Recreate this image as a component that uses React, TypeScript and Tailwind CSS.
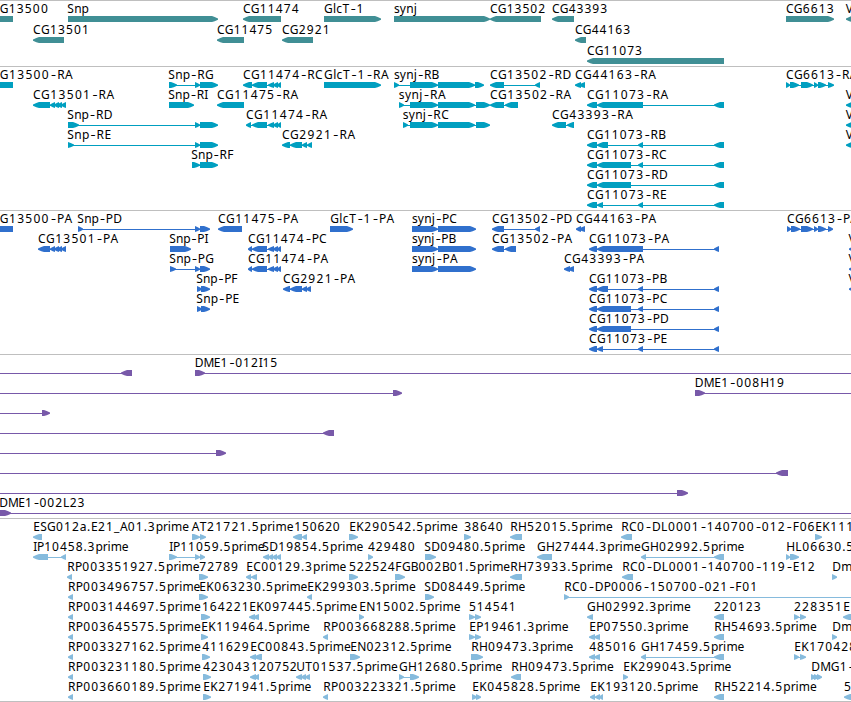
type Exon = [number, number];
type Feature = {
  label: string;
  from: number;
  to: number;
  strand: '+' | '-';
  exons: Exon[];
};
type TrackData = { name: string; color: string; height: string; pitch: number; rows: Feature[][] };

const f = (label: string, from: number, to: number, strand: '+' | '-', ...exons: Exon[]): Feature => ({
  label, from, to, strand, exons,
});

// Horizontal advance of each glyph in the label face, in pixels.
const ADVANCE: Record<string, number> = {
  '-': 7, '.': 4, _: 6, A: 8, B: 7.8, C: 8, D: 9, E: 7, F: 7, G: 9, H: 9, I: 3.8, K: 8, L: 7, M: 10.5,
  N: 9.3, P: 7.4, R: 7.8, S: 7, T: 7.2, U: 9, V: 8, a: 7.3, c: 6.3, e: 7, j: 3.4, i: 3.3, l: 3.3,
  m: 11.2, n: 7.5, p: 7.4, r: 4.8, s: 6, y: 6.5,
};

function glyphPositions(text: string, from: number, to: number) {
  const widths = [...text].map((c) => ADVANCE[c] ?? 8);
  const total = widths.reduce((a, b) => a + b, 0);
  const scale = to > 0 ? (to - from + 1.4) / total : 1;
  let x = from - 0.8;
  return widths.map((w, i) => {
    const at = x + (text[i] === '-' ? 0.9 : 0);
    x += w * scale;
    return at.toFixed(2);
  });
}

function Label({ text, from, to, y }: { text: string; from: number; to: number; y: number }) {
  const xs = glyphPositions(text, from, to);
  const runs = text.match(/-|[^-]+/g) ?? [];
  let offset = 0;
  return (
    <text y={y} className="fill-black font-['Noto_Sans','Open_Sans',sans-serif] text-[12px]">
      {runs.map((run, i) => {
        const x = xs.slice(offset, offset + run.length).join(' ');
        offset += run.length;
        return (
          <tspan key={i} x={x} className={run === '-' ? "font-['Inter','Noto_Sans',sans-serif]" : undefined}>
            {run}
          </tspan>
        );
      })}
    </text>
  );
}

// Box with a rounded-off arrow tip on the side the strand points to.
function exonPoints([a, b]: Exon, strand: '+' | '-', y: number) {
  const head = Math.min(6, b - a);
  const tip = strand === '+' ? b : a;
  const back = strand === '+' ? a : b;
  const dir = strand === '+' ? -1 : 1;
  return [
    [back, y],
    [tip + dir * head, y],
    [tip + dir * head * 0.55, y + 0.9],
    [tip, y + 2.4],
    [tip, y + 3.8],
    [tip + dir * head * 0.55, y + 5.2],
    [tip + dir * head, y + 6],
    [back, y + 6],
  ].map((p) => p.join(',')).join(' ');
}

const EDGE = 870;
const genes: TrackData = {
  name: 'Genes', color: '#408f95', height: 'h-[66px]', pitch: 21,
  rows: [
    [
      f('G13500', 0.6, 48.3, '-', [-20, 13]), f('Snp', 68, 88.3, '+', [68, 218]),
      f('CG11474', 243.7, 299, '-', [243, 281]), f('GlcT-1', 324.7, 364, '+', [324, 381]),
      f('synj', 394.7, 416.5, '+', [394, 490]), f('CG13502', 490.7, 545.5, '-', [490, 541]),
      f('CG43393', 552.7, 607.5, '-', [552, 574]), f('CG6613', 786.7, 834, '+', [786, 834]),
      f('V', 846.5, 0, '-', [846, EDGE]),
    ],
    [
      f('CG13501', 33.7, 89.3, '-', [33, 64]), f('CG11475', 217.7, 272.5, '-', [217, 244]),
      f('CG2921', 282.7, 330, '-', [282, 313]), f('CG44163', 575.7, 630.5, '-', [575, 586]),
    ],
    [f('CG11073', 587.7, 642.3, '-', [587, 724])],
  ],
};

const transcripts: TrackData = {
  name: 'Transcripts', color: '#009fc0', height: 'h-[144px]', pitch: 20,
  rows: [
    [
      f('G13500-RA', 0.6, 72.7, '-', [-20, 13]),
      f('Snp-RG', 169, 213.5, '+', [169, 177], [195, 200], [200, 218]),
      f('CG11474-RC', 243.7, 322.5, '-', [243, 252], [252, 267], [268, 274], [273, 278], [277, 281]),
      f('GlcT-1-RA', 324.7, 388.5, '+', [324, 381]),
      f('synj-RB', 394.7, 438.7, '+', [394, 399], [410, 438], [438, 475], [475, 484]),
      f('CG13502-RD', 490.7, 571, '-', [490, 504], [535, 540]),
      f('CG44163-RA', 575.7, 655.7, '-', [575, 581], [579, 585]),
      f('CG6613-RA', 786.7, 0, '+', [786, 790], [790, 799], [801, 813], [814, 818], [818, 826], [828, 834]),
    ],
    [
      f('CG13501-RA', 33.7, 114, '-', [33, 50], [50, 55], [54, 59], [57, 62], [61, 66]),
      f('Snp-RI', 169, 207.5, '+', [169, 194]),
      f('CG11475-RA', 217.7, 298, '-', [217, 244]),
      f('synj-RA', 399.5, 445.7, '+', [399, 404], [410, 438], [438, 475], [476, 490]),
      f('CG13502-RA', 490.7, 571, '-', [490, 504], [505, 518]),
      f('CG11073-RA', 587.7, 668, '-', [587, 597], [597, 643], [714, 724]),
      f('V', 846.5, 0, '-', [846, EDGE]),
    ],
    [
      f('Snp-RD', 68, 112, '+', [68, 79], [195, 200], [200, 218]),
      f('CG11474-RA', 246.7, 327, '-', [246, 251], [252, 267], [268, 274], [273, 278], [277, 281]),
      f('synj-RC', 403.5, 448.7, '+', [403, 408], [410, 438], [438, 475], [476, 490]),
      f('CG43393-RA', 552.7, 632.7, '-', [552, 566], [567, 574]),
      f('V', 846.5, 0, '-', [846, EDGE]),
    ],
    [
      f('Snp-RE', 68, 111, '+', [68, 74], [195, 200], [200, 218]),
      f('CG2921-RA', 282.7, 355, '-', [282, 290], [290, 302], [302, 307], [307, 312]),
      f('CG11073-RB', 587.7, 665.5, '-', [587, 597], [597, 608], [638, 643], [714, 724]),
      f('V', 846.5, 0, '-', [846, EDGE]),
    ],
    [
      f('Snp-RF', 192, 233.5, '+', [192, 200], [200, 218]),
      f('CG11073-RC', 587.7, 666.5, '-', [587, 597], [597, 631], [638, 643], [714, 724]),
    ],
    [f('CG11073-RD', 587.7, 667.5, '-', [587, 597], [597, 631], [714, 724])],
    [f('CG11073-RE', 587.7, 666.5, '-', [587, 597], [597, 603], [638, 643], [714, 724])],
  ],
};

const cds: TrackData = {
  name: 'CDS', color: '#3070cd', height: 'h-[144px]', pitch: 20,
  rows: [
    [
      f('G13500-PA', 0.6, 72, '-', [-20, 13]),
      f('Snp-PD', 78, 121.5, '+', [78, 83], [195, 200], [200, 210]),
      f('CG11475-PA', 218.7, 298, '-', [218, 242]),
      f('GlcT-1-PA', 331, 394, '+', [330, 353]),
      f('synj-PC', 412.7, 456.5, '+', [412, 438], [438, 476]),
      f('CG13502-PD', 492.7, 572, '-', [492, 504], [535, 540]),
      f('CG44163-PA', 576.7, 656, '-', [576, 581], [579, 585]),
      f('CG6613-PA', 787.7, 0, '+', [787, 791], [791, 800], [801, 813], [814, 818], [818, 826], [828, 833]),
    ],
    [
      f('CG13501-PA', 38.7, 118, '-', [38, 50], [50, 55], [54, 59], [57, 62], [61, 66]),
      f('Snp-PI', 170, 207.5, '+', [170, 191]),
      f('CG11474-PC', 248.7, 326.5, '-', [248, 252], [252, 267], [268, 274], [273, 278], [277, 281]),
      f('synj-PB', 412.7, 455.5, '+', [412, 438], [438, 476]),
      f('CG13502-PA', 492.7, 572, '-', [492, 504], [505, 516]),
      f('CG11073-PA', 589.7, 669, '-', [589, 597], [597, 643], [714, 719]),
      f('V', 849.3, 0, '-', [849, EDGE]),
    ],
    [
      f('Snp-PG', 170, 213.5, '+', [170, 176], [195, 200], [200, 210]),
      f('CG11474-PA', 248.7, 328, '-', [248, 252], [252, 267], [268, 274], [273, 278], [277, 281]),
      f('synj-PA', 412.7, 457.5, '+', [412, 438], [438, 476]),
      f('CG43393-PA', 564.7, 644, '-', [564, 570], [568, 574]),
      f('V', 849.3, 0, '-', [849, EDGE]),
    ],
    [
      f('Snp-PF', 197, 237.5, '+', [197, 202], [201, 210]),
      f('CG2921-PA', 283.7, 355, '-', [283, 290], [290, 302], [302, 307], [306, 311]),
      f('CG11073-PB', 589.7, 666.5, '-', [589, 597], [597, 608], [638, 643], [714, 719]),
      f('V', 849.3, 0, '-', [849, EDGE]),
    ],
    [
      f('Snp-PE', 197, 239, '+', [197, 202], [201, 210]),
      f('CG11073-PC', 589.7, 667, '-', [589, 597], [597, 631], [638, 643], [714, 719]),
    ],
    [f('CG11073-PD', 589.7, 668.5, '-', [589, 597], [597, 631], [714, 719])],
    [f('CG11073-PE', 589.7, 667, '-', [589, 597], [597, 603], [638, 643], [714, 719])],
  ],
};

const bacs: TrackData = {
  name: 'BACs', color: '#7859a9', height: 'h-[164px]', pitch: 20,
  rows: [
    [f('', 0, 0, '-', [-20, -10], [121, 132]), f('DME1-012I15', 195.5, 277.5, '+', [195, 205], [860, EDGE])],
    [f('', 0, 0, '+', [-20, -10], [393, 402]), f('DME1-008H19', 695.5, 784.5, '+', [695, 705], [860, EDGE])],
    [f('', 0, 0, '+', [-20, -10], [42, 50])],
    [f('', 0, 0, '-', [-20, -10], [323, 334])],
    [f('', 0, 0, '+', [-20, -10], [216, 226])],
    [f('', 0, 0, '-', [-20, -10], [776, 788])],
    [f('', 0, 0, '+', [-20, -10], [677, 688])],
    [f('DME1-002L23', 0, 84.7, '+', [-1, 11], [860, EDGE])],
  ],
};

const ests: TrackData = {
  name: 'ESTs', color: '#86bbdd', height: 'h-[183px]', pitch: 20,
  rows: [
    [
      f('ESG012a.E21_A01.3prime', 34, 188.5, '-', [33, 42]),
      f('AT21721.5prime', 192.5, 293.3, '+', [192, 200], [200, 206]),
      f('150620', 295, 340, '-', [293, 302], [302, 307]),
      f('EK290542.5prime', 350, 457.5, '+', [349, 358]),
      f('38640', 465, 503, '+', [464, 471]),
      f('RH52015.5prime', 511, 612.5, '-', [510, 522]),
      f('RC0-DL0001-140700-012-F06', 622, 815, '-', [621, 632]),
      f('EK111', 816, 0, '+', [815, 822]),
    ],
    [
      f('IP10458.3prime', 34, 128, '-', [33, 48], [61, 66]),
      f('IP11059.5prime', 170, 264, '+', [169, 177], [195, 200], [200, 205]),
      f('SD19854.5prime', 263, 363, '-', [263, 269], [268, 273], [272, 277], [276, 281]),
      f('429480', 368.7, 415, '+', [368, 373]),
      f('SD09480.5prime', 425, 525, '+', [425, 436]),
      f('GH27444.3prime', 537.7, 640.5, '-', [537, 552]),
      f('GH02992.5prime', 641.7, 744, '-', [641, 646], [714, 724]),
      f('HL06630.5prime', 787, 0, '+', [786, 790], [790, 799]),
    ],
    [
      f('RP003351927.5prime', 68, 199, '-', [67, 72]),
      f('72789', 200, 238.5, '+', [199, 208]),
      f('EC00129.3prime', 247, 346, '-', [246, 251], [251, 257]),
      f('522524', 349.7, 395, '+', [349, 358]),
      f('FGB002B01.5prime', 396, 509.5, '+', [395, 405]),
      f('RH73933.5prime', 511, 612.5, '-', [510, 522]),
      f('RC0-DL0001-140700-119-E12', 623, 815, '-', [622, 633]),
      f('Dm', 833, 0, '+', [832, 837]),
    ],
    [
      f('RP003496757.5prime', 68.7, 200, '-', [68, 73]),
      f('EK063230.5prime', 200, 307, '+', [199, 208]),
      f('EK299303.5prime', 308, 415.5, '-', [307, 312]),
      f('SD08449.5prime', 425, 525, '+', [425, 434]),
      f('RC0-DP0006-150700-021-F01', 565, 757.5, '+', [564, 569], [860, EDGE]),
    ],
    [
      f('RP003144697.5prime', 68.7, 200.5, '-', [68, 73]),
      f('164221', 202.7, 249, '+', [201, 210]),
      f('EK097445.5prime', 250, 357, '-', [249, 255], [253, 259]),
      f('EN15002.5prime', 360, 460, '+', [359, 364]),
      f('514541', 469.7, 516, '+', [469, 475], [475, 481]),
      f('GH02992.3prime', 587.7, 690.5, '-', [587, 593]),
      f('220123', 714.7, 761, '-', [714, 724]),
      f('228351', 794.7, 842.5, '+', [794, 799], [800, 806]),
      f('E', 844, 0, '-', [843, EDGE]),
    ],
    [
      f('RP003645575.5prime', 68.7, 200.5, '-', [68, 73]),
      f('EK119464.5prime', 202, 309.5, '+', [201, 208]),
      f('RP003668288.5prime', 324, 455.5, '-', [323, 328]),
      f('EP19461.3prime', 470, 568, '+', [469, 475], [475, 481]),
      f('EP07550.3prime', 590, 688, '-', [589, 595], [594, 600]),
      f('RH54693.5prime', 715, 816.5, '-', [714, 724]),
      f('Dm', 833, 0, '+', [832, 837]),
    ],
    [
      f('RP003327162.5prime', 68.7, 200.5, '-', [68, 73]),
      f('411629', 203, 249, '+', [202, 210]),
      f('EC00843.5prime', 251, 350.5, '-', [250, 256], [254, 262]),
      f('EN02312.5prime', 351, 451, '+', [350, 360]),
      f('RH09473.3prime', 472, 573, '+', [471, 483]),
      f('485016', 590, 636, '-', [589, 595], [594, 600]),
      f('GH17459.5prime', 641.7, 744, '-', [641, 646], [714, 724]),
      f('EK170428', 795, 0, '+', [794, 799], [800, 806]),
    ],
    [
      f('RP003231180.5prime', 68.7, 200.5, '-', [68, 73]),
      f('423043', 203.7, 250, '+', [203, 211]),
      f('120752', 252, 297, '-', [250, 256], [254, 259]),
      f('UT01537.5prime', 297, 397.5, '-', [296, 302], [301, 306], [305, 310]),
      f('GH12680.5prime', 399.7, 502, '+', [399, 404], [410, 419]),
      f('RH09473.5prime', 512, 613.5, '-', [511, 521]),
      f('EK299043.5prime', 624, 731, '+', [623, 628]),
      f('DMG1-', 812, 0, '+', [811, 816], [814, 819], [817, 822]),
    ],
    [
      f('RP003660189.5prime', 68.7, 200.5, '-', [68, 73]),
      f('EK271941.5prime', 204, 311, '+', [203, 211]),
      f('RP003223321.5prime', 324, 455.5, '-', [323, 328]),
      f('EK045828.5prime', 473, 580, '+', [472, 477], [476, 481]),
      f('EK193120.5prime', 591, 698, '-', [590, 595], [595, 600], [599, 603]),
      f('RH52214.5prime', 715, 816.5, '-', [714, 724]),
      f('5', 844.7, 0, '-', [844, EDGE]),
    ],
  ],
};

function Track({ track }: { track: TrackData }) {
  return (
    <section aria-label={track.name} className={`w-full overflow-hidden border-t border-[#bfbfbf] ${track.height}`}>
      <svg className="block h-full w-full" fill={track.color}>
        {track.rows.map((row, r) => {
          const base = 12 + r * track.pitch;
          return row.map((feat, i) => {
            const start = feat.exons[0][0];
            const end = feat.exons[feat.exons.length - 1][1];
            return (
              <g key={`${r}-${i}`}>
                {feat.exons.length > 1 && (
                  <rect x={start + 1} y={base + 6} width={end - start - 2} height={1} />
                )}
                {feat.exons.map((exon, e) => (
                  <polygon key={e} points={exonPoints(exon, feat.strand, base + 3)} />
                ))}
                {feat.label && <Label text={feat.label} from={feat.from} to={feat.to} y={base} />}
              </g>
            );
          });
        })}
      </svg>
    </section>
  );
}

export default function App() {
  return (
    <main className="flex h-[702px] w-[851px] flex-col overflow-hidden border-b border-[#bfbfbf] bg-white">
      {[genes, transcripts, cds, bacs, ests].map((track) => (
        <Track key={track.name} track={track} />
      ))}
    </main>
  );
}
